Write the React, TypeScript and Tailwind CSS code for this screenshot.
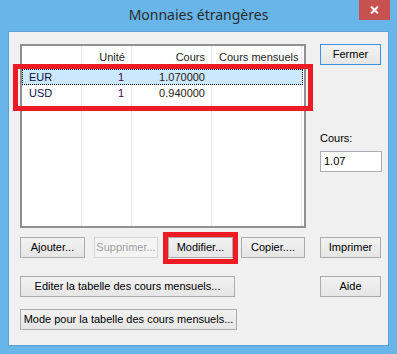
import React from "react";

const ui = { fontFamily: '"Liberation Sans", Arial, sans-serif' };

function Btn(props: { label: string; w: string; disabled?: boolean; isDefault?: boolean }) {
    const border = props.disabled
        ? "border-[#d5d5d5] text-[#a0a0a0] bg-[#f4f4f4]"
        : props.isDefault
        ? "border-[#3c94e0] text-black bg-gradient-to-b from-[#f2f2f2] to-[#e6e6e6]"
        : "border-[#acacac] text-black bg-gradient-to-b from-[#f2f2f2] to-[#e6e6e6]";
    return (
        <div className={`${props.w} h-[21px] border ${border} flex items-center justify-center text-[11px] leading-none shrink-0 whitespace-nowrap`}>
            {props.label}
        </div>
    );
}

const rows = [
    { code: "EUR", unit: "1", rate: "1.070000", selected: true },
    { code: "USD", unit: "1", rate: "0.940000", selected: false },
];

function Cell(props: { w: string; right?: boolean; children?: React.ReactNode }) {
    return (
        <div className={`${props.w} h-full border-r border-[#e3eaf3] flex items-center whitespace-nowrap ${props.right ? "justify-end pr-[6px]" : "pl-[7px]"}`}>
            {props.children}
        </div>
    );
}

function CurrencyList() {
    return (
        <div className="w-[286px] h-[184px] ml-[11px] border-2 border-[#8e8f8f] bg-white relative shrink-0 text-[11px]">
            {/* grid lines run down the whole list */}
            <div className="absolute inset-0 flex pointer-events-none">
                <div className="w-[60px] h-full border-r border-[#e3eaf3]" />
                <div className="w-[50px] h-full border-r border-[#e3eaf3]" />
                <div className="w-[80px] h-full border-r border-[#e3eaf3]" />
                <div className="w-[90px] h-full border-r border-[#e3eaf3]" />
            </div>
            <div className="relative flex flex-col">
                <div className="h-[23px] flex text-[#1e1e1e]">
                    <Cell w="w-[60px]" />
                    <Cell w="w-[50px]" right>Unité</Cell>
                    <Cell w="w-[80px]" right>Cours</Cell>
                    <Cell w="w-[90px]">Cours mensuels</Cell>
                </div>
                {rows.map((r) => (
                    <div key={r.code} className={`h-[16px] w-[281px] flex ${r.selected ? "bg-[#cce8ff] outline-1 outline-dotted outline-black -outline-offset-1" : ""}`}>
                        <div className="w-[60px] flex items-center pl-[7px] text-[#101040]">{r.code}</div>
                        <div className="w-[50px] flex items-center justify-end pr-[8px] text-[#500050]">{r.unit}</div>
                        <div className="w-[80px] flex items-center justify-end pr-[7px] text-[#2a2010]">{r.rate}</div>
                    </div>
                ))}
            </div>
        </div>
    );
}

export default function App() {
    return (
        <div className="w-[397px] h-[354px] bg-[#68b5ea] flex flex-col relative overflow-hidden" style={ui}>
            <div className="h-[31px] flex items-center justify-center relative">
                <span className="text-[14px] text-[#2b2b2b] -mt-[2px]" style={{ fontFamily: '"Noto Sans", "Open Sans", sans-serif' }}>
                    Monnaies étrangères
                </span>
                <div className="absolute right-[7px] top-0 w-[31px] h-[20px] bg-[#c75050] flex items-center justify-center">
                    <svg width="9" height="8" viewBox="0 0 9 8">
                        <path d="M1 0.5 L8 7.5 M8 0.5 L1 7.5" stroke="white" strokeWidth="2" />
                    </svg>
                </div>
            </div>
            <div className="mx-[8px] mb-[8px] flex-1 bg-[#f0f0f0] border border-[#5b9fd3] flex flex-col pt-[12px]">
                <div className="flex">
                    <CurrencyList />
                    <div className="ml-[14px] flex flex-col">
                        <Btn label="Fermer" w="w-[61px]" isDefault />
                        <div className="mt-[68px] text-[11px] leading-none">Cours:</div>
                        <div className="mt-[7px] w-[62px] h-[21px] border border-[#abadb3] bg-white flex items-center px-[3px] text-[11px]">
                            1.07
                        </div>
                    </div>
                </div>
                <div className="flex mt-[9px] pl-[11px]">
                    <Btn label="Ajouter..." w="w-[65px]" />
                    <div className="ml-[9px]"><Btn label="Supprimer..." w="w-[64px]" disabled /></div>
                    <div className="ml-[10px]"><Btn label="Modifier..." w="w-[65px]" /></div>
                    <div className="ml-[8px]"><Btn label="Copier...." w="w-[64px]" /></div>
                    <div className="ml-[15px]"><Btn label="Imprimer" w="w-[61px]" /></div>
                </div>
                <div className="flex mt-[18px] pl-[11px]">
                    <Btn label="Editer la tabelle des cours mensuels..." w="w-[215px]" />
                    <div className="ml-[85px]"><Btn label="Aide" w="w-[61px]" /></div>
                </div>
                <div className="flex mt-[12px] pl-[11px]">
                    <Btn label="Mode pour la tabelle des cours mensuels..." w="w-[217px]" />
                </div>
            </div>
            {/* red annotation frames */}
            <div className="absolute left-[13px] top-[64px] w-[300px] h-[47px] border-[5px] border-[#ed1c24]" />
            <div className="absolute left-[163px] top-[232px] w-[75px] h-[32px] border-[5px] border-[#ed1c24]" />
        </div>
    );
}
